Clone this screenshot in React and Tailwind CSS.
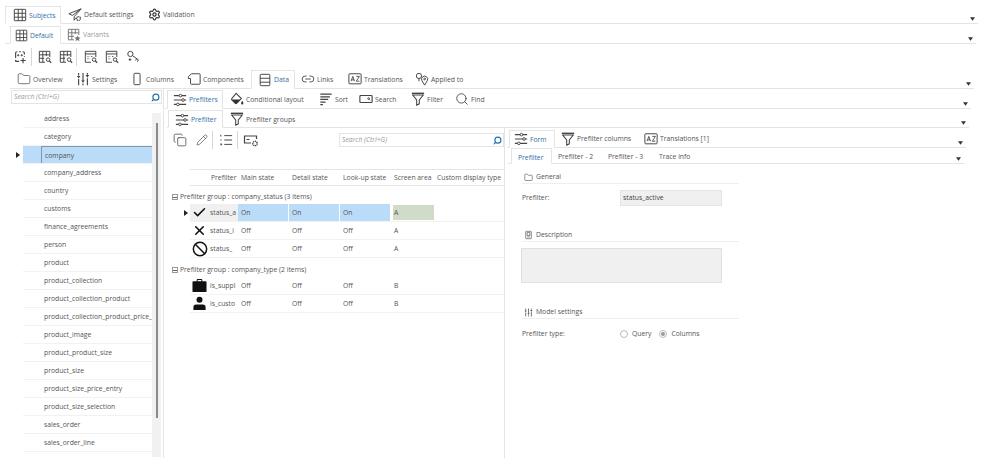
import React from 'react';
import { Folder, Search, Link2, Pencil, Copy, Check, X, Ban, Settings } from 'lucide-react';

const Svg = ({ children, className = 'w-[14px] h-[14px]', stroke = '#444' }) => (
  <svg viewBox="0 0 16 16" fill="none" stroke={stroke} strokeWidth="1.1" className={`shrink-0 ${className}`}>{children}</svg>
);

const TableIcon = ({ className }) => (
  <Svg className={className}>
    <rect x="1.5" y="1.5" width="13" height="13" rx="0.5" />
    <path d="M1.5 6h13M1.5 10.5h13M6 1.5v13M10.5 1.5v13" />
  </Svg>
);
const VariantsIcon = () => (
  <Svg stroke="#777">
    <path d="M8 13.5H1.5v-12h12V8M1.5 5.5h12M1.5 9.5H8M5.5 1.5v12M9.5 1.5V7" />
    <path d="M12 8.5l1.1 2.2 2.4.3-1.8 1.6.5 2.4-2.2-1.2-2.2 1.2.5-2.4-1.8-1.6 2.4-.3z" fill="#777" stroke="none" />
  </Svg>
);
const SendGearIcon = () => (
  <Svg>
    <path d="M15 1L1 6.5l4 2L15 1zM15 1L7 10v4l2-3" />
    <circle cx="12" cy="12" r="2.2" strokeWidth="1.4" strokeDasharray="1.2 .6" />
  </Svg>
);
const ValidationIcon = () => <Settings className="w-[13px] h-[13px] shrink-0 text-[#333]" strokeWidth={2.2} />;
const AddFrameIcon = () => (
  <Svg>
    <path d="M3 9V3.500A1.500 1.500 0 0 1 4.500 2H5M7 2h2M11 2h.5A1.500 1.500 0 0 1 13 3.500V5M13 7v1M3 11v1.500A.5.5 0 0 0 3.500 13H7" strokeWidth="1.3" />
    <path d="M11.500 9v6M8.500 12h6" strokeWidth="1.3" />
    <circle cx="6" cy="6" r=".7" fill="#444" />
    <circle cx="10" cy="6" r=".7" fill="#444" />
  </Svg>
);
const TableSearchIcon = () => (
  <Svg>
    <path d="M8 14H1.500V1.500h12V8M1.500 5.500h12M1.500 9.500H7M5.500 1.500V14M9.500 1.500V7" />
    <circle cx="11.500" cy="11" r="2" />
    <path d="M13 12.500l2 2" strokeWidth="1.5" />
  </Svg>
);
const FormSearchIcon = () => (
  <Svg>
    <path d="M8 14H1.500V1.500h12V8M1.500 4.500h12" />
    <path d="M4 7.500h2M4 10h2M8 7.500h2" strokeDasharray="1 .6" />
    <circle cx="11.500" cy="11" r="2" />
    <path d="M13 12.500l2 2" strokeWidth="1.500" />
  </Svg>
);
const KeySearchIcon = () => (
  <Svg>
    <circle cx="5" cy="4.500" r="3" />
    <path d="M7.500 6.500l7 5M12 10l-1 2M14 11.500l-1 2M4.500 9.500v3M3 11h3" />
  </Svg>
);
const ColumnIcon = () => (
  <Svg><rect x="4.500" y="1.500" width="7" height="13" rx="1" /></Svg>
);
const ComponentIcon = () => (
  <Svg><path d="M5 2h9a1 1 0 0 1 1 1v10a1 1 0 0 1-1 1H5a1 1 0 0 1-1-1V7.500H1.500V5.500z" /></Svg>
);
const DataIcon = () => (
  <Svg>
    <rect x="2.500" y="1.500" width="11" height="13" rx="1" />
    <path d="M2.500 6h11M2.500 10.500h11" />
  </Svg>
);
const TranslateIcon = () => (
  <Svg>
    <rect x="1" y="2" width="14" height="11.500" rx="1" />
    <path d="M3.500 10.500L5.500 5l2 5.500M4.200 9h2.600M9.500 5H13l-3.500 5.500H13" strokeWidth="1" />
  </Svg>
);
const PinsIcon = () => (
  <Svg>
    <circle cx="4.500" cy="4.500" r="3" />
    <path d="M4.500 7.500v3" />
    <path d="M11 15l-3-5a3.500 3.500 0 1 1 6 0z" />
    <circle cx="11" cy="8" r="1" />
  </Svg>
);
const SortIcon = () => (
  <Svg><path d="M1.500 2.500h13M1.500 5.500h11M1.500 8.500h9M1.500 11.500h6M1.500 14.500h3" strokeWidth="1.300" /></Svg>
);
const SearchBoxIcon = () => (
  <Svg>
    <rect x="1" y="4" width="14" height="8" rx="1" strokeWidth="1.300" />
    <circle cx="11" cy="7.500" r="1" />
    <path d="M11.800 8.500l1 1" />
  </Svg>
);
const ListIcon = () => (
  <Svg>
    <path d="M6 3h9M6 8h9M6 13h9" />
    <path d="M2 2v2M1.500 8h1.500M1.500 12.500h1.500v1h-1.500" />
  </Svg>
);
const ScreenGearIcon = () => (
  <Svg className="w-[16px] h-[16px]">
    <path d="M8 11H1.500V4h12v3" strokeWidth="1.200" />
    <path d="M3.500 7.500h3" />
    <circle cx="12" cy="11.500" r="2.200" strokeWidth="1.400" strokeDasharray="1.200 .6" />
  </Svg>
);
const BriefcaseIcon = () => (
  <svg viewBox="0 0 16 16" className="w-[15px] h-[15px]" fill="#111">
    <path d="M5 3.500V2a1 1 0 0 1 1-1h4a1 1 0 0 1 1 1v1.500h3.500a1 1 0 0 1 1 1V14a1 1 0 0 1-1 1h-13a1 1 0 0 1-1-1V4.500a1 1 0 0 1 1-1zm1 0h4V2H6z" fillRule="evenodd" />
  </svg>
);
const PersonIcon = () => (
  <svg viewBox="0 0 16 16" className="w-[15px] h-[15px]" fill="#111">
    <circle cx="8" cy="4" r="3.200" />
    <path d="M1.500 15v-3a3 3 0 0 1 3-3h7a3 3 0 0 1 3 3v3z" />
  </svg>
);
const BookIcon = () => (
  <Svg className="w-[9px] h-[10px]">
    <rect x="3" y="1.500" width="10" height="13" rx="1" />
    <rect x="5.500" y="4" width="5" height="5" />
    <path d="M5.500 11.500h5" />
  </Svg>
);
// three upright sliders with little knobs
const UprightSliders = ({ className = 'w-[14px] h-[14px]' }) => (
  <Svg className={className}>
    <path d="M3 1v3M3 8v7M8 1v8M8 13v2M13 1v2M13 7v8" strokeWidth="1.300" />
    <path d="M1 4.500h4l-2 3zM6 9.500h4l-2 3zM11 3.500h4l-2 3z" fill="#444" stroke="none" />
  </Svg>
);
const SlidersIcon = () => (
  <Svg>
    <path d="M1 3h6M10 3h5M1 8h9M13 8h2M1 13h3M7 13h8" strokeWidth="1.200" />
    <circle cx="8.500" cy="3" r="1.500" />
    <circle cx="11.500" cy="8" r="1.500" />
    <circle cx="5.500" cy="13" r="1.500" />
  </Svg>
);
const FilterIcon = () => (
  <Svg>
    <path d="M1 1.500h14" strokeWidth="1.600" />
    <path d="M2 3.500l4.500 5.500v6l3-1.500V9L14 3.500z" strokeWidth="1.200" />
  </Svg>
);
const BucketIcon = () => (
  <Svg>
    <path d="M7 1.500l6 6-5.500 5.500a1 1 0 0 1-1.400 0L2 8.900a1 1 0 0 1 0-1.400z" strokeWidth="1.200" />
    <path d="M2 8.500h10L7.500 13a1 1 0 0 1-1.400 0z" fill="#333" stroke="none" />
    <path d="M14 10c.8 1.400 1.300 2.200 1.300 3a1.300 1.300 0 0 1-2.600 0c0-.8.500-1.600 1.300-3z" fill="#333" stroke="none" />
  </Svg>
);
const MiniMenu = () => (
  <svg viewBox="0 0 6 4" className="w-[5px] h-[4px] ml-auto mr-[3px] mb-[2px] shrink-0 self-end" fill="#333"><path d="M0 0h6L3 4z" /></svg>
);

const lucideCls = 'w-[14px] h-[14px] shrink-0 text-[#444]';

function Tab({ icon, label, active, muted, className }) {
  return (
    <div className={`flex items-center gap-[2px] ${active ? '-mb-px bg-white border border-b-white border-[#e4e4e4] text-[#2f6fa8]' : muted ? 'text-[#999]' : 'text-[#555]'} ${className}`}>
      {icon}
      <span className="whitespace-nowrap pt-[2px]">{label}</span>
    </div>
  );
}

function TabRow({ className, children }) {
  return <div className={`flex items-stretch border-b border-[#e4e4e4] ${className}`}>{children}<MiniMenu /></div>;
}

function IconSep({ className }) {
  return <div className={`w-px h-[18px] bg-[#d6d6d6] ${className}`} />;
}

function SearchBox({ className }) {
  return (
    <div className={`flex items-center justify-between h-[14px] border border-[#e4e4e4] pl-[2px] pr-[1px] bg-white ${className}`}>
      <span className="italic text-[#999]">Search (Ctrl+G)</span>
      <Search className="w-[9px] h-[9px] text-[#1f6fb5] -scale-x-100" strokeWidth={3} />
    </div>
  );
}

const subjects = ['address', 'category', 'company', 'company_address', 'country', 'customs', 'finance_agreements', 'person', 'product', 'product_collection', 'product_collection_product', 'product_collection_product_price_', 'product_image', 'product_product_size', 'product_size', 'product_size_price_entry', 'product_size_selection', 'sales_order', 'sales_order_line'];

function SubjectList() {
  return (
    <div className="w-[152px] ml-[10px] shrink-0 flex flex-col">
      <SearchBox className="ml-px mt-[1px]" />
      <div className="flex mt-[6px] h-[347px] overflow-hidden">
        <div className="w-[129px] ml-[13px] shrink-0">
          {subjects.map(s => {
            const sel = s === 'company';
            return (
              <div key={s} className={`relative flex h-[18px] items-stretch border-b border-[#f2f2f2] ${sel ? 'bg-[#bbdcf8]' : ''}`}>
                {sel && <span className="absolute -left-[7px] top-[6px] w-0 h-0 border-y-[3px] border-y-transparent border-l-[4px] border-l-[#222]" />}
                <div className="w-[18px] shrink-0" />
                <div className={`flex-1 flex items-center pt-[2px] pl-[3px] overflow-hidden whitespace-nowrap text-[#555] ${sel ? 'border-t border-l border-[#7f97ac] pl-[2px]' : ''}`}>{s}</div>
              </div>
            );
          })}
        </div>
        <div className="w-[9px] mt-[3px] bg-[#f1f1f1] flex justify-center pt-[10px]">
          <div className="w-[2px] h-[295px] bg-[#8a8a8a]" />
        </div>
      </div>
    </div>
  );
}

const gridCols = 'grid grid-cols-[19px_29px_51px_51px_51px_45px_69px] ml-[25px]';

const groups = [
  {
    title: 'Prefilter group : company_status (3 items)',
    rows: [
      { icon: <Check className="w-[15px] h-[15px] text-[#111]" strokeWidth={2.500} />, name: 'status_a', on: true, area: 'A' },
      { icon: <X className="w-[15px] h-[15px] text-[#111]" strokeWidth={2.500} />, name: 'status_i', area: 'A' },
      { icon: <Ban className="w-[16px] h-[16px] text-[#111]" strokeWidth={2.200} />, name: 'status_', area: 'A' },
    ],
  },
  {
    title: 'Prefilter group : company_type (2 items)',
    rows: [
      { icon: <BriefcaseIcon />, name: 'is_suppl', area: 'B' },
      { icon: <PersonIcon />, name: 'is_custo', area: 'B' },
    ],
  },
];

function GridRow({ row }) {
  const state = row.on ? 'On' : 'Off';
  const stateCls = `flex items-center pt-[2px] pl-[3px] ${row.on ? 'bg-[#bbdcf8] border-r border-white' : ''}`;
  return (
    <div className={`relative ${gridCols} h-[18px] border-b border-[#f2f2f2] text-[#555]`}>
      {row.on && <span className="absolute -left-[6px] top-[6px] w-0 h-0 border-y-[3px] border-y-transparent border-l-[4px] border-l-[#222]" />}
      <div className={`flex items-center justify-center ${row.on ? 'bg-[#f0f0f0]' : ''}`}>{row.icon}</div>
      <div className={`flex items-center pt-[2px] pl-[1px] overflow-hidden whitespace-nowrap ${row.on ? 'bg-[#f0f0f0]' : ''}`}>{row.name}</div>
      <div className={stateCls}>{state}</div>
      <div className={stateCls}>{state}</div>
      <div className={stateCls}>{state}</div>
      <div className="flex items-center pr-[2px] pl-[2px] py-px">
        <div className={`w-full h-full flex items-center pt-[2px] pl-[1px] ${row.on ? 'bg-[#d0dcc8]' : ''}`}>{row.area}</div>
      </div>
      <div />
    </div>
  );
}

function GridPane() {
  return (
    <div className="w-[340px] shrink-0 border-r border-[#e4e4e4] flex flex-col">
      <div className="flex items-center h-[21px] pl-[8px] pt-[3px]">
        <Copy className={lucideCls} strokeWidth={1.300} />
        <Pencil className="w-[12px] h-[12px] shrink-0 text-[#444] ml-[9px]" strokeWidth={1.300} />
        <IconSep className="mx-[4px] mr-[6px]" />
        <ListIcon />
        <IconSep className="ml-[4px] mr-[5px]" />
        <ScreenGearIcon />
        <SearchBox className="ml-auto w-[165px]" />
      </div>
      <div className={`${gridCols} mt-[20px] h-[17px] pt-[2px] items-center border-y border-[#e4e4e4] text-[#555]`}>
        <div />
        <div className="col-span-1 -ml-[18px] pl-[20px] whitespace-nowrap">Prefilter</div>
        <div className="pl-[3px]">Main state</div>
        <div className="pl-[3px]">Detail state</div>
        <div className="pl-[3px] whitespace-nowrap">Look-up state</div>
        <div className="pl-[3px] whitespace-nowrap">Screen area</div>
        <div className="pl-[1px] whitespace-nowrap">Custom display type</div>
      </div>
      {groups.map((g, i) => (
        <div key={g.title} className={i ? 'mt-[5px]' : 'mt-[4px]'}>
          <div className="flex items-center h-[14px] pl-[7px] gap-[2px] text-[#555]">
            <span className="flex items-center justify-center w-[6px] h-[6px] border border-[#999]">
              <span className="w-[4px] h-px bg-[#666]" />
            </span>
            {g.title}
          </div>
          {g.rows.map(r => <GridRow key={r.name} row={r} />)}
        </div>
      ))}
    </div>
  );
}

function Section({ icon, title, className }) {
  return (
    <div className={`flex items-center gap-[3px] h-[15px] w-[217px] ml-[15px] pl-[2px] pt-[2px] border-b border-[#efefef] text-[#555] ${className}`}>
      {icon}
      {title}
    </div>
  );
}

function FormPane() {
  return (
    <div className="flex-1 flex flex-col pl-[2px]">
      <TabRow className="h-[18px] mt-[2px] mr-[16px]">
        <Tab active icon={<SlidersIcon />} label="Form" className="w-[46px] pl-[4px] ml-[2px]" />
        <Tab icon={<FilterIcon />} label="Prefilter columns" className="w-[82px] pl-[6px]" />
        <Tab icon={<TranslateIcon />} label="Translations [1]" className="pl-[7px]" />
      </TabRow>
      <TabRow className="h-[16px] ml-[1px] mr-[18px]">
        <Tab active label="Prefilter" className="w-[41px] pt-[2px] pl-[6px] ml-[3px]" />
        <Tab label="Prefilter - 2" className="w-[49px] pt-[2px] pl-[6px]" />
        <Tab label="Prefilter - 3" className="w-[51px] pt-[2px] pl-[7px]" />
        <Tab label="Trace info" className="pt-[2px] pl-[7px]" />
      </TabRow>
      <Section icon={<Folder className="w-[9px] h-[9px] text-[#444]" strokeWidth={1.500} />} title="General" className="mt-[5px]" />
      <div className="flex items-center h-[16px] mt-[6px] ml-[15px] text-[#555]">
        <div className="w-[98px]">Prefilter:</div>
        <div className="w-[102px] h-full flex items-center pl-[2px] bg-[#f0f0f0] border border-[#e4e4e4] text-[#444]">status_active</div>
      </div>
      <Section icon={<BookIcon />} title="Description" className="mt-[21px]" />
      <div className="w-[201px] h-[35px] ml-[14px] mt-[6px] bg-[#f0f0f0] border border-[#e0e0e0]" />
      <Section icon={<UprightSliders className="w-[9px] h-[9px]" />} title="Model settings" className="mt-[21px]" />
      <div className="flex items-center h-[14px] mt-[8px] ml-[15px] text-[#555]">
        <div className="w-[98px]">Prefilter type:</div>
        <span className="w-[8px] h-[8px] rounded-full border border-[#bbb]" />
        <span className="ml-[4px]">Query</span>
        <span className="ml-[8px] w-[8px] h-[8px] rounded-full border border-[#bbb] flex items-center justify-center">
          <span className="w-[4px] h-[4px] rounded-full bg-[#999]" />
        </span>
        <span className="ml-[4px]">Columns</span>
      </div>
    </div>
  );
}

export default function App() {
  return (
    <div className="w-[982px] h-[465px] overflow-hidden bg-white text-[6.8px] leading-none font-['Open_Sans',sans-serif] text-[#555]">
      <div className="pt-[4px]">
        <TabRow className="h-[20px] pt-[2px] ml-[5px] mr-[4px]">
          <Tab active icon={<TableIcon />} label="Subjects" className="w-[56px] pl-[7px]" />
          <Tab icon={<SendGearIcon />} label="Default settings" className="w-[80px] pl-[7px]" />
          <Tab icon={<ValidationIcon />} label="Validation" className="pl-[7px]" />
        </TabRow>
        <TabRow className="h-[20px] pt-[2px] ml-[5px] mr-[6px]">
          <Tab active icon={<TableIcon className="w-[13px] h-[13px]" />} label="Default" className="w-[51px] pl-[4px] ml-[5px]" />
          <Tab muted icon={<VariantsIcon />} label="Variants" className="pl-[6px]" />
        </TabRow>
        <div className="flex items-center h-[26px] pl-[13px]">
          <AddFrameIcon />
          <IconSep className="ml-[4px] mr-[6px]" />
          <TableSearchIcon />
          <div className="w-[7px]" />
          <TableSearchIcon />
          <IconSep className="ml-[3px] mr-[7px]" />
          <FormSearchIcon />
          <div className="w-[7px]" />
          <FormSearchIcon />
          <div className="w-[7px]" />
          <KeySearchIcon />
        </div>
        <TabRow className="h-[19px] ml-[10px] mr-[8px]">
          <Tab icon={<Folder className={lucideCls} strokeWidth={1.200} />} label="Overview" className="w-[59px] pl-[7px]" />
          <Tab icon={<UprightSliders />} label="Settings" className="w-[57px] pl-[7px]" />
          <Tab icon={<ColumnIcon />} label="Columns" className="w-[54px] pl-[4px]" />
          <Tab icon={<ComponentIcon />} label="Components" className="w-[71px] pl-[7px]" />
          <Tab active icon={<DataIcon />} label="Data" className="w-[44px] pl-[6px]" />
          <Tab icon={<Link2 className={lucideCls} strokeWidth={1.500} />} label="Links" className="w-[45px] pl-[6px]" />
          <Tab icon={<TranslateIcon />} label="Translations" className="w-[68px] pl-[8px]" />
          <Tab icon={<PinsIcon />} label="Applied to" className="pl-[7px]" />
        </TabRow>
      </div>
      <div className="flex">
        <SubjectList />
        <div className="w-px ml-[1px] bg-[#e4e4e4] self-stretch" />
        <div className="flex-1 flex flex-col pl-[1px]">
          <TabRow className="h-[19px] mt-[1px] mr-[11px]">
            <Tab active icon={<SlidersIcon />} label="Prefilters" className="w-[56px] pl-[5px] ml-[2px]" />
            <Tab icon={<BucketIcon />} label="Conditional layout" className="w-[88px] pl-[7px]" />
            <Tab icon={<SortIcon />} label="Sort" className="w-[41px] pl-[8px]" />
            <Tab icon={<SearchBoxIcon />} label="Search" className="w-[51px] pl-[7px]" />
            <Tab icon={<FilterIcon />} label="Filter" className="w-[45px] pl-[8px]" />
            <Tab icon={<Search className={lucideCls} strokeWidth={1.500} />} label="Find" className="pl-[7px]" />
          </TabRow>
          <TabRow className="h-[18px] mt-[1px] ml-[2px] mr-[13px]">
            <Tab active icon={<SlidersIcon />} label="Prefilter" className="w-[55px] pt-[1px] pl-[6px] ml-px" />
            <Tab icon={<FilterIcon />} label="Prefilter groups" className="pt-[1px] pl-[7px]" />
          </TabRow>
          <div className="flex h-[330px]">
            <GridPane />
            <FormPane />
          </div>
        </div>
      </div>
    </div>
  );
}
